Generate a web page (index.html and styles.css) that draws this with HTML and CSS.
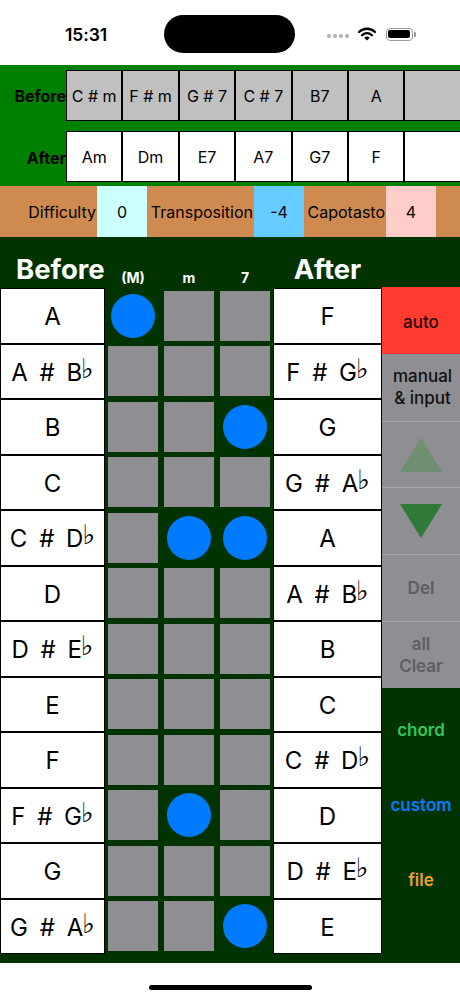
FILE: index.html
```html
<!DOCTYPE html>
<html lang="en">
<head>
<meta charset="utf-8">
<title>Chord Transposer</title>
<link rel="stylesheet" href="styles.css">
</head>
<body>
<div class="screen">
  <div class="status">
    <div class="time-wrap"><span class="time">15:31</span></div>
    <div class="island"></div>
    <div class="status-right">
      <div class="signal"><i></i><i></i><i></i><i></i></div>
      <svg class="wifi" width="20" height="14" viewBox="0 0 20 14">
        <path d="M2 5 A11.5 11.5 0 0 1 18 5" stroke="#000" stroke-width="2.3" fill="none" stroke-linecap="round"/>
        <path d="M5.1 8.2 A7 7 0 0 1 14.9 8.2" stroke="#000" stroke-width="2.3" fill="none" stroke-linecap="round"/>
        <path d="M10 13.6 L7.2 10.8 A4 4 0 0 1 12.8 10.8 Z" fill="#000"/>
      </svg>
      <div class="battery"><div class="battery-body"><div class="battery-fill"></div></div><div class="battery-cap"></div></div>
    </div>
  </div>

  <div class="top">
    <div class="prog-row prog-before">
      <div class="prog-label">Before</div>
      <div class="prog-cell">C # m</div>
      <div class="prog-cell">F # m</div>
      <div class="prog-cell">G # 7</div>
      <div class="prog-cell">C # 7</div>
      <div class="prog-cell">B7</div>
      <div class="prog-cell">A</div>
      <div class="prog-cell"></div>
    </div>
    <div class="prog-row prog-after">
      <div class="prog-label">After</div>
      <div class="prog-cell">Am</div>
      <div class="prog-cell">Dm</div>
      <div class="prog-cell">E7</div>
      <div class="prog-cell">A7</div>
      <div class="prog-cell">G7</div>
      <div class="prog-cell">F</div>
      <div class="prog-cell"></div>
    </div>
  </div>

  <div class="params">
    <div class="param-label pl-1">Difficulty</div>
    <div class="param-value pv-cyan">0</div>
    <div class="param-label pl-2">Transposition</div>
    <div class="param-value pv-blue">-4</div>
    <div class="param-label pl-3">Capotasto</div>
    <div class="param-value pv-pink">4</div>
  </div>

  <div class="main">
    <div class="heads">
      <div class="head-big head-before">Before</div>
      <div class="head-small">(M)</div>
      <div class="head-small">m</div>
      <div class="head-small">7</div>
      <div class="head-big head-after">After</div>
    </div>
    <div class="board">
      <div class="keys before-keys">
        <div class="key">A</div>
        <div class="key">A # B<span class="flat">♭</span></div>
        <div class="key">B</div>
        <div class="key">C</div>
        <div class="key">C # D<span class="flat">♭</span></div>
        <div class="key">D</div>
        <div class="key">D # E<span class="flat">♭</span></div>
        <div class="key">E</div>
        <div class="key">F</div>
        <div class="key">F # G<span class="flat">♭</span></div>
        <div class="key">G</div>
        <div class="key">G # A<span class="flat">♭</span></div>
      </div>
      <div class="pads">
        <div class="pad"><div class="dot"></div></div><div class="pad"><div class="sq"></div></div><div class="pad"><div class="sq"></div></div>
        <div class="pad"><div class="sq"></div></div><div class="pad"><div class="sq"></div></div><div class="pad"><div class="sq"></div></div>
        <div class="pad"><div class="sq"></div></div><div class="pad"><div class="sq"></div></div><div class="pad"><div class="dot"></div></div>
        <div class="pad"><div class="sq"></div></div><div class="pad"><div class="sq"></div></div><div class="pad"><div class="sq"></div></div>
        <div class="pad"><div class="sq"></div></div><div class="pad"><div class="dot"></div></div><div class="pad"><div class="dot"></div></div>
        <div class="pad"><div class="sq"></div></div><div class="pad"><div class="sq"></div></div><div class="pad"><div class="sq"></div></div>
        <div class="pad"><div class="sq"></div></div><div class="pad"><div class="sq"></div></div><div class="pad"><div class="sq"></div></div>
        <div class="pad"><div class="sq"></div></div><div class="pad"><div class="sq"></div></div><div class="pad"><div class="sq"></div></div>
        <div class="pad"><div class="sq"></div></div><div class="pad"><div class="sq"></div></div><div class="pad"><div class="sq"></div></div>
        <div class="pad"><div class="sq"></div></div><div class="pad"><div class="dot"></div></div><div class="pad"><div class="sq"></div></div>
        <div class="pad"><div class="sq"></div></div><div class="pad"><div class="sq"></div></div><div class="pad"><div class="sq"></div></div>
        <div class="pad"><div class="sq"></div></div><div class="pad"><div class="sq"></div></div><div class="pad"><div class="dot"></div></div>
      </div>
      <div class="keys after-keys">
        <div class="key">F</div>
        <div class="key">F # G<span class="flat">♭</span></div>
        <div class="key">G</div>
        <div class="key">G # A<span class="flat">♭</span></div>
        <div class="key">A</div>
        <div class="key">A # B<span class="flat">♭</span></div>
        <div class="key">B</div>
        <div class="key">C</div>
        <div class="key">C # D<span class="flat">♭</span></div>
        <div class="key">D</div>
        <div class="key">D # E<span class="flat">♭</span></div>
        <div class="key">E</div>
      </div>
      <div class="side">
        <div class="btn btn-auto">auto</div>
        <div class="btn btn-manual">manual<br>&amp; input</div>
        <div class="btn btn-arrow"><svg width="42" height="34" viewBox="0 0 42 34"><polygon points="21,0 42,34 0,34" fill="#6e8f70"/></svg></div>
        <div class="btn btn-arrow"><svg width="42" height="34" viewBox="0 0 42 34"><polygon points="0,0 42,0 21,34" fill="#2f7a36"/></svg></div>
        <div class="btn btn-dim">Del</div>
        <div class="btn btn-dim">all<br>Clear</div>
        <div class="link link-chord">chord</div>
        <div class="link link-custom">custom</div>
        <div class="link link-file">file</div>
      </div>
    </div>
  </div>

  <div class="home"><div class="home-bar"></div></div>
</div>
</body>
</html>
```

FILE: styles.css
```css
html, body {
  margin: 0;
  padding: 0;
  background: #fff;
}
body {
  font-family: Inter, "Liberation Sans", "DejaVu Sans", sans-serif;
  color: #000;
}
.screen {
  width: 460px;
  height: 999px;
  overflow: hidden;
}

/* status bar */
.status {
  height: 65px;
  display: flex;
  align-items: center;
  padding-top: 3px;
  box-sizing: border-box;
}
.time-wrap {
  width: 164px;
  padding-left: 65px;
  box-sizing: border-box;
}
.time {
  font-size: 17.5px;
  font-weight: 600;
  letter-spacing: -0.1px;
}
.island {
  width: 131px;
  height: 38px;
  border-radius: 19px;
  background: #000;
}
.status-right {
  flex: 1;
  display: flex;
  align-items: center;
  padding-left: 32px;
}
.signal {
  display: flex;
  gap: 2.5px;
  margin-top: 4px;
}
.signal i {
  width: 3.5px;
  height: 3.5px;
  border-radius: 50%;
  background: #b4b4b4;
}
.wifi {
  margin-left: 8px;
}
.battery {
  margin-left: 9px;
  display: flex;
  align-items: center;
}
.battery-body {
  width: 27px;
  height: 13px;
  border: 1px solid #9a9a9a;
  border-radius: 4px;
  padding: 1.5px;
  box-sizing: border-box;
}
.battery-fill {
  width: 100%;
  height: 100%;
  background: #000;
  border-radius: 2px;
}
.battery-cap {
  width: 2px;
  height: 5px;
  background: #9a9a9a;
  border-radius: 0 1px 1px 0;
  margin-left: 1px;
}

/* progression */
.top {
  height: 121px;
  background: #008000;
  padding: 5px 0 4px;
  box-sizing: border-box;
  display: flex;
  flex-direction: column;
  gap: 10px;
  overflow: hidden;
}
.prog-row {
  display: flex;
  height: 51px;
}
.prog-label {
  flex: 0 0 66px;
  display: flex;
  align-items: center;
  justify-content: flex-end;
  font-size: 16px;
  font-weight: 700;
  white-space: nowrap;
}
.prog-after .prog-label {
  padding-top: 3px;
}
.prog-cell {
  flex: 0 0 56.4px;
  box-sizing: border-box;
  border: 1px solid #000;
  display: flex;
  align-items: center;
  justify-content: center;
  font-size: 16px;
  white-space: nowrap;
}
.prog-before .prog-cell {
  background: #c0c0c0;
}
.prog-after .prog-cell {
  background: #fff;
}

/* parameters */
.params {
  height: 51px;
  display: flex;
  background: #cf8b4f;
  font-size: 16px;
}
.param-label {
  display: flex;
  align-items: center;
  justify-content: flex-end;
  padding-right: 1px;
  box-sizing: border-box;
}
.pl-1 { width: 97px; }
.pl-2 { width: 107px; }
.pl-3 { width: 82px; }
.param-value {
  width: 50px;
  display: flex;
  align-items: center;
  justify-content: center;
}
.pv-cyan { background: #ccffff; }
.pv-blue { background: #66ccff; }
.pv-pink { background: #ffcccc; }

/* main board */
.main {
  height: 726px;
  background: #003300;
}
.heads {
  height: 51px;
  display: grid;
  grid-template-columns: 105px 56px 56px 56px 109px;
  align-items: end;
  color: #fff;
  font-weight: 700;
}
.head-big {
  font-size: 27.5px;
  line-height: 1;
  padding-bottom: 5px;
  white-space: nowrap;
}
.head-before {
  padding-left: 16px;
}
.head-after {
  text-align: center;
}
.head-small {
  font-size: 14px;
  line-height: 1;
  text-align: center;
  padding-bottom: 3px;
}
.board {
  display: flex;
}
.keys {
  display: flex;
  flex-direction: column;
}
.before-keys { width: 105px; }
.after-keys { width: 109px; }
.key {
  height: 55.5px;
  box-sizing: border-box;
  border: 1px solid #000;
  background: #fff;
  display: flex;
  align-items: center;
  justify-content: center;
  padding-top: 3px;
  font-size: 24px;
  line-height: 28px;
  word-spacing: 5px;
  white-space: nowrap;
}
.flat {
  font-family: "DejaVu Sans", sans-serif;
  font-size: 27px;
  line-height: 28px;
  color: #000;
  margin-left: -1px;
  position: relative;
  top: -4px;
}
.pads {
  display: grid;
  grid-template-columns: repeat(3, 56px);
  grid-template-rows: repeat(12, 55.5px);
}
.pad {
  display: flex;
  align-items: center;
  justify-content: center;
}
.sq {
  width: 50px;
  height: 50px;
  background: #8e8e93;
}
.dot {
  width: 44px;
  height: 44px;
  border-radius: 50%;
  background: #007aff;
}

/* side buttons */
.side {
  width: 78px;
  display: flex;
  flex-direction: column;
  margin-top: -1px;
}
.btn {
  height: 66.83px;
  box-sizing: border-box;
  background: #8e8e93;
  border-top: 1px solid #a8a8ad;
  display: flex;
  align-items: center;
  justify-content: center;
  text-align: center;
  font-size: 17px;
  font-weight: 500;
  line-height: 22px;
  color: #111;
}
.btn-auto {
  background: #ff3b30;
  border-top: none;
  color: #2a0505;
  padding-top: 4px;
}
.btn-manual {
  border-top: none;
  padding-left: 3px;
}
.btn-dim {
  color: #5e5e63;
  font-weight: 600;
}
.link {
  height: 75px;
  display: flex;
  align-items: center;
  justify-content: center;
  font-size: 17px;
  font-weight: 600;
}
.link-chord {
  margin-top: 5px;
  color: #34c759;
}
.link-custom {
  color: #0a7aff;
}
.link-file {
  color: #e9a230;
}

/* home indicator */
.home {
  height: 36px;
  display: flex;
  justify-content: center;
  padding-top: 22px;
  box-sizing: border-box;
}
.home-bar {
  width: 163px;
  height: 5px;
  border-radius: 3px;
  background: #000;
}
```
